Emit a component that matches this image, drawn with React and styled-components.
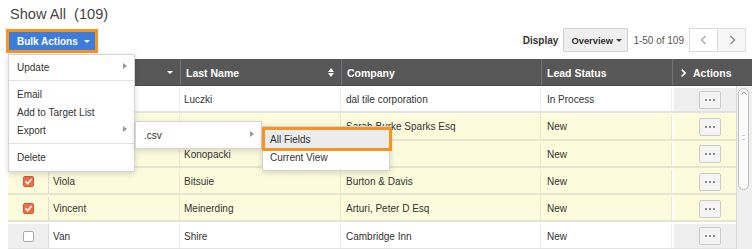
import React from "react";
import styled, { createGlobalStyle } from "styled-components";

const GlobalStyle = createGlobalStyle`
  html, body {
    margin: 0;
    padding: 0;
    background: #fff;
    overflow: hidden;
  }
  body {
    font-family: "Liberation Sans", Arial, Helvetica, sans-serif;
    font-size: 10px;
    color: #333;
  }
  * {
    box-sizing: border-box;
  }
`;

const ORANGE = "#f7931e";
const YELLOW = "#fcfbdc";
const GREY_COL = "#efefef";

const Page = styled.div`
  width: 752px;
  padding-left: 6px;
`;

const Title = styled.h1`
  margin: 0;
  height: 26px;
  padding: 5px 0 0 4px;
  font-size: 14.6px;
  line-height: 18px;
  font-weight: normal;
  color: #444;
  white-space: pre;
`;

const Toolbar = styled.div`
  height: 33px;
  padding: 2px 6px 0 0;
  display: flex;
  justify-content: space-between;
  align-items: flex-start;
`;

const BulkWrap = styled.div`
  position: relative;
  margin-top: 1px;
  border: 3px solid ${ORANGE};
  z-index: 5;
`;

const BulkButton = styled.button`
  display: flex;
  align-items: center;
  gap: 6px;
  width: 86px;
  height: 18px;
  padding: 0 0 0 8px;
  border: none;
  background: #3b7cdd;
  color: #fff;
  font-family: inherit;
  font-size: 10px;
  font-weight: bold;
  cursor: pointer;
`;

const Caret = styled.span`
  display: inline-block;
  width: 0;
  height: 0;
  border-left: 3px solid transparent;
  border-right: 3px solid transparent;
  border-top: 3px solid ${(p) => p.$color || "#fff"};
`;

const Menu = styled.div`
  position: absolute;
  left: ${(p) => p.$left}px;
  top: ${(p) => p.$top}px;
  width: ${(p) => p.$width}px;
  padding: ${(p) => p.$pad};
  background: #fff;
  border: 1px solid #d4d4d4;
  box-shadow: 0 2px 6px rgba(0, 0, 0, 0.15);
`;

const MenuItem = styled.div`
  position: relative;
  height: ${(p) => p.$h || 18}px;
  display: flex;
  align-items: center;
  justify-content: space-between;
  padding: 0 7px 0 ${(p) => p.$pl || 8}px;
  margin-left: ${(p) => (p.$active ? 2 : 0)}px;
  background: ${(p) => (p.$active ? "#ececec" : "transparent")};
  outline: ${(p) => (p.$active ? `3px solid ${ORANGE}` : "none")};
  color: #333;
  font-size: 10px;
  white-space: nowrap;
`;

const Divider = styled.div`
  height: 1px;
  margin: 4px 0;
  background: #e2e2e2;
`;

const SubArrow = styled.span`
  width: 0;
  height: 0;
  border-top: 3px solid transparent;
  border-bottom: 3px solid transparent;
  border-left: 4px solid #999;
  margin-top: -3px;
`;

const RightGroup = styled.div`
  display: flex;
  align-items: center;
  gap: 5px;
`;

const Label = styled.span`
  font-weight: bold;
  color: #333;
`;

const Select = styled.div`
  width: 65px;
  height: 24px;
  display: flex;
  align-items: center;
  justify-content: space-between;
  padding: 0 5px 0 7px;
  border: 1px solid #cfcfcf;
  border-radius: 2px;
  background: #f0f0f0;
  font-size: 9.4px;
  font-weight: bold;
  color: #333;
`;

const Info = styled.span`
  color: #555;
`;

const Pager = styled.div`
  display: flex;
`;

const PageButton = styled.div`
  width: 29px;
  height: 24px;
  display: flex;
  align-items: center;
  justify-content: center;
  border: 1px solid #dcdcdc;
  margin-left: ${(p) => (p.$first ? 0 : -1)}px;
  background: ${(p) => (p.$first ? "#fff" : "#f6f6f6")};
`;

const Table = styled.div`
  margin-left: 2px;
  width: 744px;
`;

const COLS = "41px 131px 161px 200px 131px 1fr";

const HeaderRow = styled.div`
  display: grid;
  grid-template-columns: ${COLS};
  height: 27px;
  background: #575757;
  border-bottom: 1px solid #4a4a4a;
`;

const HeadCell = styled.div`
  display: flex;
  align-items: center;
  justify-content: space-between;
  gap: 5px;
  padding: 1px 7px 0 5px;
  border-left: ${(p) => (p.$first ? "none" : "1px solid #737373")};
  color: #fff;
  font-weight: bold;
  font-size: 10.5px;
`;

const HeadLeft = styled.span`
  display: flex;
  align-items: center;
  gap: 5px;
`;

const Body = styled.div`
  position: relative;
`;

const Row = styled.div`
  display: grid;
  grid-template-columns: ${COLS};
  height: 27.3px;
  padding-top: 2px;
  background: ${(p) => (p.$selected ? YELLOW : "#fff")};
  border-bottom: 2px solid ${(p) => (p.$selected ? "#e6e5d2" : "#e3e3e3")};
`;

const CheckCell = styled.div`
  display: flex;
  align-items: center;
  justify-content: center;
  background: ${(p) => (p.$selected ? YELLOW : GREY_COL)};
  border-right: 1px solid #dcdcdc;
`;

const Cell = styled.div`
  display: flex;
  align-items: center;
  padding-left: ${(p) => p.$pl || 4}px;
  border-right: 1px solid ${(p) => (p.$selected ? "#ebead6" : "#ececec")};
  color: #333;
  white-space: nowrap;
  overflow: hidden;
`;

const ActionCell = styled.div`
  display: flex;
  align-items: center;
  justify-content: center;
  padding-right: 6px;
  border-left: 2px solid #fff;
  background: ${(p) => (p.$selected ? YELLOW : GREY_COL)};
`;

const DotsButton = styled.div`
  width: 22px;
  height: 18px;
  display: flex;
  align-items: center;
  justify-content: center;
  gap: 2px;
  border: 1px solid #cacaca;
  border-radius: 2px;
  background: #f4f4f4;
`;

const Dot = styled.span`
  width: 2px;
  height: 2px;
  border-radius: 50%;
  background: #666;
`;

const Box = styled.span`
  width: 11px;
  height: 11px;
  display: flex;
  align-items: center;
  justify-content: center;
  border-radius: 2px;
  border: 1px solid ${(p) => (p.$checked ? "#d25a32" : "#a9a9a9")};
  background: ${(p) => (p.$checked ? "#ea7148" : "#fff")};
`;

const ScrollTrack = styled.div`
  position: absolute;
  top: 0;
  right: 0;
  bottom: 0;
  width: 16px;
  padding: 2px 3px 0 1px;
  background: #efefef;
  border-left: 1px solid #dadada;
`;

const Thumb = styled.div`
  height: 102px;
  display: flex;
  flex-direction: column;
  align-items: center;
  padding-top: 2px;
  border: 1px solid #bdbdbd;
  border-radius: 6px;
  background: #fbfbfb;
`;

const Grip = styled.div`
  margin-top: 40px;
  width: 3px;
  height: 5px;
  border-top: 1px solid #ccc;
  border-bottom: 1px solid #ccc;
`;

const SortIcon = () => (
  <svg width="6" height="9" viewBox="0 0 6 9">
    <path d="M0 4 L3 0 L6 4 Z M0 5 L3 9 L6 5 Z" fill="#fff" />
  </svg>
);

const Chevron = ({ dir, color = "#999", size = 12, width = 1.4 }) => (
  <svg width={size} height={size} viewBox="0 0 12 12">
    <path
      d={dir === "left" ? "M7.5 2 L3.5 6 L7.5 10" : "M4.5 2 L8.5 6 L4.5 10"}
      fill="none"
      stroke={color}
      strokeWidth={width}
    />
  </svg>
);

const CheckMark = () => (
  <svg width="9" height="9" viewBox="0 0 9 9">
    <path d="M1.5 4.5 L3.7 6.6 L7.6 2" fill="none" stroke="#fff" strokeWidth="1.5" />
  </svg>
);

const rows = [
  { first: "Terrie", last: "Luczki", company: "dal tile corporation", status: "In Process", selected: false },
  { first: "Sarah", last: "Sheller", company: "Sarah Burke Sparks Esq", status: "New", selected: true },
  { first: "Vinnie", last: "Konopacki", company: "Lewis Inn", status: "New", selected: true },
  { first: "Viola", last: "Bitsuie", company: "Burton & Davis", status: "New", selected: true },
  { first: "Vincent", last: "Meinerding", company: "Arturi, Peter D Esq", status: "New", selected: true },
  { first: "Van", last: "Shire", company: "Cambridge Inn", status: "New", selected: false },
];

const BulkMenu = () => (
  <Menu $left={-1} $top={22} $width={127} $pad="3px 0 5px">
    <MenuItem>
      Update
      <SubArrow />
    </MenuItem>
    <Divider />
    <MenuItem>Email</MenuItem>
    <MenuItem>Add to Target List</MenuItem>
    <MenuItem>
      Export
      <SubArrow />
      <Menu $left={126} $top={0} $width={127} $pad="2px 0">
        <MenuItem $h={22} $pl={8}>
          .csv
          <SubArrow />
          <Menu $left={126} $top={2} $width={128} $pad="3px 0 4px">
            <MenuItem $active $pl={5}>All Fields</MenuItem>
            <MenuItem $pl={7}>Current View</MenuItem>
          </Menu>
        </MenuItem>
      </Menu>
    </MenuItem>
    <Divider />
    <MenuItem>Delete</MenuItem>
  </Menu>
);

export default function App() {
  return (
    <>
      <GlobalStyle />
      <Page>
        <Title>{"Show All  (109)"}</Title>
        <Toolbar>
          <BulkWrap>
            <BulkButton>
              Bulk Actions
              <Caret />
            </BulkButton>
            <BulkMenu />
          </BulkWrap>
          <RightGroup>
            <Label>Display</Label>
            <Select>
              Overview
              <Caret $color="#444" />
            </Select>
            <Info>1-50 of 109</Info>
            <Pager>
              <PageButton $first>
                <Chevron dir="left" color="#aaa" />
              </PageButton>
              <PageButton>
                <Chevron dir="right" color="#888" />
              </PageButton>
            </Pager>
          </RightGroup>
        </Toolbar>
        <Table>
          <HeaderRow>
            <HeadCell $first />
            <HeadCell>
              First Name
              <Caret />
            </HeadCell>
            <HeadCell>
              Last Name
              <SortIcon />
            </HeadCell>
            <HeadCell>Company</HeadCell>
            <HeadCell>Lead Status</HeadCell>
            <HeadCell>
              <HeadLeft>
                <Chevron dir="right" color="#fff" size={10} width={2} />
                Actions
              </HeadLeft>
            </HeadCell>
          </HeaderRow>
          <Body>
            {rows.map((r) => (
              <Row key={r.last} $selected={r.selected}>
                <CheckCell $selected={r.selected}>
                  <Box $checked={r.selected}>{r.selected && <CheckMark />}</Box>
                </CheckCell>
                <Cell $selected={r.selected}>{r.first}</Cell>
                <Cell $selected={r.selected}>{r.last}</Cell>
                <Cell $selected={r.selected} $pl={5}>{r.company}</Cell>
                <Cell $selected={r.selected} $pl={6}>{r.status}</Cell>
                <ActionCell $selected={r.selected}>
                  <DotsButton>
                    <Dot />
                    <Dot />
                    <Dot />
                  </DotsButton>
                </ActionCell>
              </Row>
            ))}
            <ScrollTrack>
              <Thumb>
                <svg width="6" height="4" viewBox="0 0 6 4">
                  <path d="M0.5 3.5 L3 1 L5.5 3.5" fill="none" stroke="#999" strokeWidth="1" />
                </svg>
                <Grip />
              </Thumb>
            </ScrollTrack>
          </Body>
        </Table>
      </Page>
    </>
  );
}
